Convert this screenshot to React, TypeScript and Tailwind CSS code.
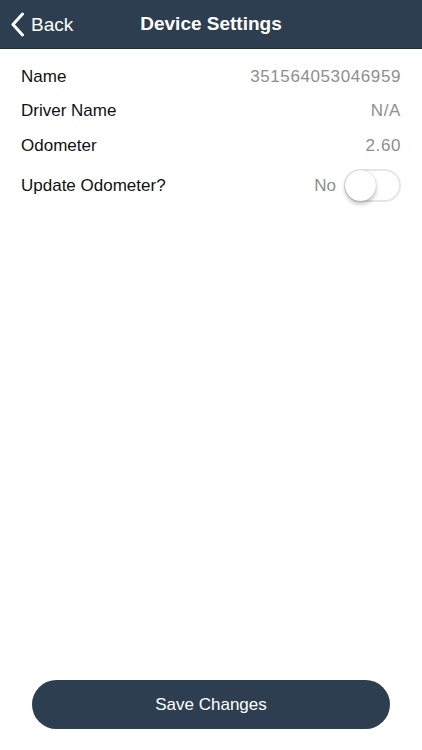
import React from "react";

export default function App() {
  const rows = [
    { label: "Name", value: "351564053046959" },
    { label: "Driver Name", value: "N/A" },
    { label: "Odometer", value: "2.60" },
  ];
  return (
    <div
      className="w-[422px] h-[750px] bg-white flex flex-col"
      style={{ fontFamily: '"Liberation Sans", sans-serif' }}
    >
      <div className="h-[49px] bg-[#2c3e50] flex items-center relative shrink-0 border-b border-[#1e2b38]">
        <div className="flex items-center pl-[10px] gap-[6px] text-white pt-[1px]">
          <svg width="15" height="25" viewBox="0 0 15 25" fill="none">
            <path d="M12.5 2 L3 12.5 L12.5 23" stroke="white" strokeWidth="3" strokeLinecap="round" strokeLinejoin="round" />
          </svg>
          <span className="text-[19px] leading-none">Back</span>
        </div>
        <div className="absolute inset-0 flex items-center justify-center pointer-events-none pt-[1px]">
          <span className="text-white text-[19px] font-semibold">Device Settings</span>
        </div>
      </div>
      <div className="flex flex-col pt-[10px] px-[21px]">
        {rows.map((r) => (
          <div key={r.label} className="h-[34.5px] flex items-center justify-between">
            <span className="text-[17px] text-[#111]">{r.label}</span>
            <span className="text-[17px] text-[#8e8e8e] tracking-[0.6px]">{r.value}</span>
          </div>
        ))}
        <div className="h-[46px] flex items-center justify-between">
          <span className="text-[17px] text-[#111]">Update Odometer?</span>
          <div className="flex items-center gap-[8px]">
            <span className="text-[17px] text-[#8e8e8e]">No</span>
            <div className="w-[57px] h-[33px] rounded-full border-2 border-[#e6e6e6] bg-white relative">
              <div className="absolute left-[-1px] top-[-1px] w-[31px] h-[31px] rounded-full bg-white shadow-[0_3px_4px_rgba(0,0,0,0.25),0_0_1px_rgba(0,0,0,0.3)]" />
            </div>
          </div>
        </div>
      </div>
      <div className="flex-1" />
      <div className="flex justify-center pb-[21px]">
        <button className="w-[358px] h-[49px] rounded-full bg-[#2c3e50] text-white text-[17px]">
          Save Changes
        </button>
      </div>
    </div>
  );
}
